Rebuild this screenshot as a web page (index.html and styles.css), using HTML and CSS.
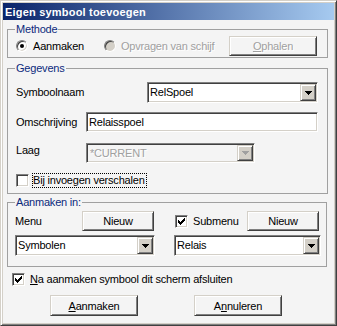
FILE: index.html
```html
<!DOCTYPE html>
<html lang="nl">
<head>
    <meta charset="UTF-8">
    <title>Eigen symbool toevoegen</title>
    <link rel="stylesheet" href="styles.css">
</head>
<body>
<div class="window">
    <div class="titlebar">Eigen symbool toevoegen</div>
    <div class="dialog">

        <fieldset class="group methode">
            <legend>Methode</legend>
            <div class="row">
                <label class="option first"><span class="radio checked"></span>Aanmaken</label>
                <label class="option disabled"><span class="radio"></span>Opvragen van schijf</label>
                <button class="btn wide push-right" disabled><u>O</u>phalen</button>
            </div>
        </fieldset>

        <fieldset class="group gegevens">
            <legend>Gegevens</legend>
            <div class="row field naam">
                <span class="field-label">Symboolnaam</span>
                <div class="combo">
                    <span class="combo-text">RelSpoel</span>
                    <span class="combo-btn"><svg width="7" height="4" viewBox="0 0 7 4"><path d="M0 0h7v1h-1v1h-1v1h-1v1h-1v-1h-1v-1h-1v-1h-1z"/></svg></span>
                </div>
            </div>
            <div class="row field omschrijving">
                <span class="field-label">Omschrijving</span>
                <input class="textbox" type="text" value="Relaisspoel">
            </div>
            <div class="row field laag">
                <span class="field-label">Laag</span>
                <div class="combo disabled">
                    <span class="combo-text">*CURRENT</span>
                    <span class="combo-btn"><svg width="7" height="4" viewBox="0 0 7 4"><path d="M0 0h7v1h-1v1h-1v1h-1v1h-1v-1h-1v-1h-1v-1h-1z"/></svg></span>
                </div>
            </div>
            <div class="row check-row">
                <span class="checkbox"></span>
                <span class="focus">Bij invoegen verschalen</span>
            </div>
        </fieldset>

        <fieldset class="group aanmaken-in">
            <legend>Aanmaken in:</legend>
            <div class="columns">
                <div class="row col-head">
                    <span>Menu</span>
                    <button class="btn small push-right">Nieuw</button>
                </div>
                <div class="row col-head right">
                    <span class="checkbox"><svg width="7" height="7" viewBox="0 0 7 7"><path d="M0 2h1v3h-1zM1 3h1v3h-1zM2 4h1v3h-1zM3 3h1v3h-1zM4 2h1v3h-1zM5 1h1v3h-1zM6 0h1v3h-1z"/></svg></span>
                    <span>Submenu</span>
                    <button class="btn small push-right">Nieuw</button>
                </div>
                <div class="combo">
                    <span class="combo-text">Symbolen</span>
                    <span class="combo-btn"><svg width="7" height="4" viewBox="0 0 7 4"><path d="M0 0h7v1h-1v1h-1v1h-1v1h-1v-1h-1v-1h-1v-1h-1z"/></svg></span>
                </div>
                <div class="combo">
                    <span class="combo-text">Relais</span>
                    <span class="combo-btn"><svg width="7" height="4" viewBox="0 0 7 4"><path d="M0 0h7v1h-1v1h-1v1h-1v1h-1v-1h-1v-1h-1v-1h-1z"/></svg></span>
                </div>
            </div>
        </fieldset>

        <div class="row close-row">
            <span class="checkbox"><svg width="7" height="7" viewBox="0 0 7 7"><path d="M0 2h1v3h-1zM1 3h1v3h-1zM2 4h1v3h-1zM3 3h1v3h-1zM4 2h1v3h-1zM5 1h1v3h-1zM6 0h1v3h-1z"/></svg></span>
            <span><u>N</u>a aanmaken symbool dit scherm afsluiten</span>
        </div>

        <div class="actions">
            <button class="btn wide tall"><u>A</u>anmaken</button>
            <button class="btn wide tall">A<u>n</u>nuleren</button>
        </div>
    </div>
</div>
</body>
</html>
```

FILE: styles.css
```css
body {
    margin: 0;
    font-family: "Liberation Sans", Arial, sans-serif;
    font-size: 11px;
    letter-spacing: -0.2px;
    color: #000;
}
.window {
    width: 337px;
    height: 326px;
    box-sizing: border-box;
    border: 1px solid;
    border-color: #d4d0c8 #404040 #404040 #d4d0c8;
    box-shadow: inset 1px 1px #fff, inset -1px -1px #808080;
    padding: 2px;
    background: #d4d0c8;
    display: flex;
    flex-direction: column;
}
.titlebar {
    height: 17px;
    line-height: 19px;
    padding-left: 2px;
    overflow: hidden;
    color: #fff;
    font-weight: bold;
    letter-spacing: 0.2px;
    background: linear-gradient(to right, #0a246a, #a6caf0);
}
.dialog {
    flex: 1;
    background: #f4f4f4;
    padding: 3px 6px 0 4px;
}
.row {
    display: flex;
    align-items: center;
}
.push-right {
    margin-left: auto;
}

/* group boxes */
.group {
    margin: 0;
    padding: 0 9px 0 8px;
    border: 1px solid #a0a0a0;
    min-width: 0;
}
.group legend {
    padding: 0 1px;
    margin-left: -1px;
    line-height: 13px;
    color: #0c2a7c;
}
.methode {
    padding-right: 10px;
    padding-bottom: 1px;
}
.gegevens {
    margin-top: 4px;
    padding-bottom: 5px;
}
.aanmaken-in {
    margin: 2px 1px 0 0;
    padding: 0 5px 10px 7px;
}
.aanmaken-in legend {
    margin-left: 0;
}

/* radios and checkboxes */
.option {
    display: flex;
    align-items: center;
    gap: 5px;
}
.option.first {
    width: 88px;
}
.disabled {
    color: #a0a0a0;
    text-shadow: 1px 1px #fff;
}
.radio {
    width: 12px;
    height: 12px;
    box-sizing: border-box;
    border-radius: 50%;
    border: 1px solid;
    border-color: #808080 #fff #fff #808080;
    box-shadow: inset 1px 1px #404040, inset -1px -1px #d4d0c8;
    background: #fff;
    display: flex;
    align-items: center;
    justify-content: center;
}
.radio.checked::after {
    content: "";
    width: 4px;
    height: 4px;
    border-radius: 50%;
    background: #000;
}
.option.disabled .radio {
    background: #d4d0c8;
}
.checkbox {
    width: 13px;
    height: 13px;
    box-sizing: border-box;
    border: 1px solid;
    border-color: #808080 #fff #fff #808080;
    box-shadow: inset 1px 1px #404040, inset -1px -1px #d4d0c8;
    background: #fff;
    display: flex;
    align-items: center;
    justify-content: center;
    flex-shrink: 0;
}
.focus {
    border: 1px dotted #000;
    line-height: 13px;
    padding-right: 1px;
    margin-left: 3px;
}

/* buttons */
.btn {
    font: inherit;
    letter-spacing: inherit;
    color: #000;
    box-sizing: border-box;
    height: 20px;
    padding: 0;
    border: 1px solid;
    border-color: #d4d0c8 #404040 #404040 #d4d0c8;
    box-shadow: inset 1px 1px #fff, inset -1px -1px #808080;
    background: #f4f4f4;
}
.btn:disabled {
    color: #a0a0a0;
    text-shadow: 1px 1px #fff;
}
.btn.wide {
    width: 88px;
}
.btn.small {
    width: 72px;
}
.btn.tall {
    height: 21px;
}

/* fields */
.field-label {
    width: 70px;
    flex-shrink: 0;
    line-height: 13px;
}
.naam {
    margin-top: 7px;
}
.naam .combo {
    width: 171px;
    margin-left: auto;
}
.omschrijving {
    margin-top: 9px;
}
.laag {
    margin-top: 11px;
}
.laag .field-label {
    padding-bottom: 5px;
}
.laag .combo {
    width: 169px;
    height: 20px;
}
.check-row {
    margin-top: 10px;
}
.textbox {
    flex: 1;
    min-width: 0;
    height: 20px;
    box-sizing: border-box;
    margin: 0;
    padding: 0 2px;
    font: inherit;
    letter-spacing: inherit;
    border: 1px solid;
    border-color: #808080 #fff #fff #808080;
    box-shadow: inset 1px 1px #404040, inset -1px -1px #d4d0c8;
    background: #fff;
    outline: none;
}
.combo {
    display: flex;
    height: 21px;
    box-sizing: border-box;
    border: 1px solid;
    border-color: #808080 #fff #fff #808080;
    box-shadow: inset 1px 1px #404040, inset -1px -1px #d4d0c8;
    background: #fff;
    padding: 1px;
}
.combo-text {
    flex: 1;
    padding-left: 1px;
    line-height: 17px;
    white-space: nowrap;
    overflow: hidden;
}
.combo-btn {
    width: 16px;
    box-sizing: border-box;
    border: 1px solid;
    border-color: #d4d0c8 #404040 #404040 #d4d0c8;
    box-shadow: inset 1px 1px #fff, inset -1px -1px #808080;
    background: #d4d0c8;
    display: flex;
    align-items: center;
    justify-content: center;
}
.combo.disabled {
    background: #f4f4f4;
}
.combo.disabled .combo-text {
    padding-left: 2px;
    color: #a0a0a0;
}
.combo.disabled svg {
    fill: #a0a0a0;
}

/* aanmaken in */
.columns {
    display: grid;
    grid-template-columns: 140px 147px;
    column-gap: 19px;
    row-gap: 4px;
    margin-top: 2px;
}
.col-head .btn {
    margin-right: 1px;
}
.col-head.right .checkbox {
    margin: 0 5px 0 1px;
}
.col-head.right .btn {
    margin-right: 2px;
}

/* bottom */
.close-row {
    margin-top: 6px;
    padding-left: 5px;
    gap: 5px;
    line-height: 13px;
}
.actions {
    display: flex;
    justify-content: center;
    gap: 56px;
    margin-top: 9px;
    padding-right: 3px;
}
```
